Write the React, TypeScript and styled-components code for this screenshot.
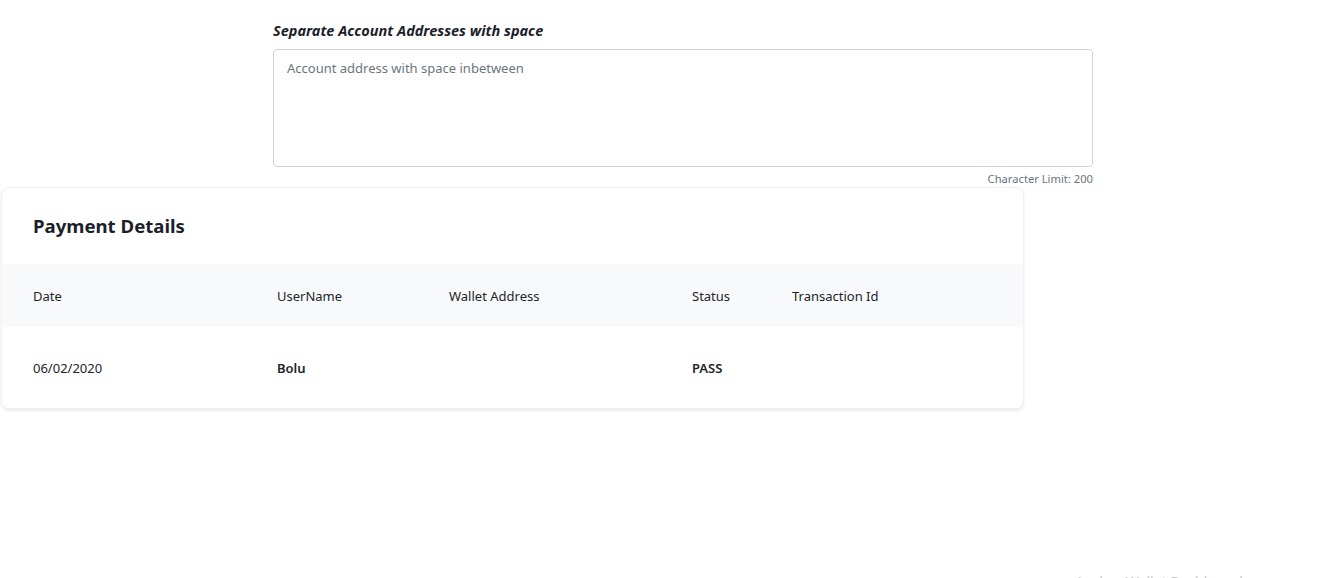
import React from "react";
import styled, { createGlobalStyle } from "styled-components";

const Global = createGlobalStyle`
  html, body { margin: 0; padding: 0; background: #fff; }
  body {
    font-family: "Noto Sans", "Open Sans", sans-serif;
    color: #212529;
    font-size: 13px;
    -webkit-font-smoothing: antialiased;
  }
`;

const Page = styled.div`
  display: flex;
  flex-direction: column;
  padding-top: 20px;
  width: 1327px;
  height: 578px;
  overflow: hidden;
  box-sizing: border-box;
  & > * { flex-shrink: 0; }
`;

const FormBlock = styled.div`
  margin-left: 273px;
  width: 820px;
  display: flex;
  flex-direction: column;
`;

const Label = styled.label`
  font-weight: 700;
  font-style: italic;
  font-size: 14.5px;
  line-height: 21px;
  color: #1c1f2b;
  margin-bottom: 8px;
`;

const TextArea = styled.textarea`
  box-sizing: border-box;
  height: 118px;
  width: 100%;
  resize: none;
  border: 1px solid #ced4da;
  border-radius: 4px;
  padding: 8px 13px;
  font-family: inherit;
  font-size: 13px;
  line-height: 20px;
  color: #495057;
  outline: none;
  &::placeholder { color: #6c757d; }
`;

const Hint = styled.small`
  align-self: flex-end;
  font-size: 11.2px;
  line-height: 16px;
  margin-top: 4px;
  color: #6c757d;
`;

const Card = styled.section`
  margin-left: 1px;
  width: 1023px;
  border: 1px solid #f0f0f0;
  border-radius: 8px;
  box-shadow: 0 2px 3px rgba(0, 0, 0, 0.08);
  background: #fff;
  overflow: hidden;
  box-sizing: border-box;
`;

const CardTitle = styled.h2`
  margin: 0;
  padding: 26px 31px 26px;
  font-size: 18.6px;
  line-height: 24px;
  font-weight: 700;
  color: #1c1f2b;
`;

const Row = styled.div<{ $head?: boolean }>`
  display: grid;
  grid-template-columns: 244px 172px 243px 100px 1fr;
  align-items: center;
  height: ${(p) => (p.$head ? "63px" : "81px")};
  background: ${(p) => (p.$head ? "#f8f9fa" : "#fff")};
`;

const Cell = styled.div<{ $bold?: boolean }>`
  padding-left: 31px;
  font-size: 13px;
  line-height: 20px;
  font-weight: ${(p) => (p.$bold ? 600 : 400)};
  color: #212529;
  white-space: nowrap;
`;

const Footer = styled.div`
  margin-top: 163px;
  margin-left: 1075px;
  font-size: 14px;
  line-height: 20px;
  color: #c8c8c8;
  white-space: nowrap;
`;

export default function App() {
  return (
    <>
      <Global />
      <Page>
        <FormBlock>
          <Label>Separate Account Addresses with space</Label>
          <TextArea placeholder="Account address with space inbetween" />
          <Hint>Character Limit: 200</Hint>
        </FormBlock>
        <Card>
          <CardTitle>Payment Details</CardTitle>
          <Row $head>
            <Cell>Date</Cell>
            <Cell>UserName</Cell>
            <Cell>Wallet Address</Cell>
            <Cell>Status</Cell>
            <Cell>Transaction Id</Cell>
          </Row>
          <Row>
            <Cell>06/02/2020</Cell>
            <Cell $bold>Bolu</Cell>
            <Cell></Cell>
            <Cell $bold>PASS</Cell>
            <Cell></Cell>
          </Row>
        </Card>
        <Footer>Anchor Wallet Dashboard</Footer>
      </Page>
    </>
  );
}
